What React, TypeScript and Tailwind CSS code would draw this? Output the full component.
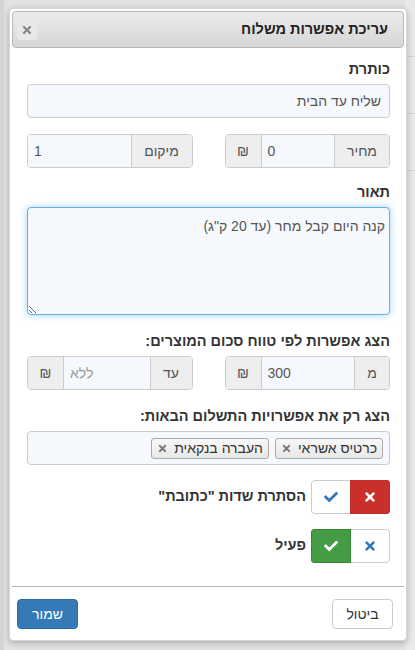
import React from "react";
import { FaCheck, FaTimes } from "react-icons/fa";

const font = { fontFamily: '"Liberation Sans", Arial, sans-serif' };

function Addon({ children, w }: { children: React.ReactNode; w: string }) {
  return (
    <div className={`${w} flex h-full shrink-0 items-center justify-center bg-[#eeeeee] text-[14px] text-[#555]`}>
      {children}
    </div>
  );
}

export default function App() {
  return (
    <div style={font} dir="rtl" className="relative h-[650px] w-[415px] overflow-hidden bg-[#e2e2e2] text-[#333]">
      <div className="absolute right-0 top-0 h-full w-[10px] bg-[#e9e9e9]">
        <div className="mt-[56px] h-px w-full bg-[#d6d6d6]" />
        <div className="mt-[56px] h-px w-full bg-[#d6d6d6]" />
        <div className="mt-[56px] h-px w-full bg-[#d6d6d6]" />
      </div>
      <div className="absolute left-0 top-0 h-full w-[4px] bg-[#d4d4d4]" />
      <div className="relative mr-[8px] mt-[8px] flex h-[633px] w-[398px] flex-col rounded-[4px] border border-[#d6d6d6] bg-white p-[2px] shadow-[0_2px_6px_rgba(0,0,0,0.25)]">
        {/* header */}
        <div className="flex h-[37px] shrink-0 items-center justify-between rounded-[4px] border border-[#b8b8b8] bg-gradient-to-b from-[#ececec] to-[#d6d6d6] pl-[4px] pr-[15px]">
          <div className="text-[14.5px] font-bold text-[#222]">עריכת אפשרות משלוח</div>
          <div className="flex h-[20px] w-[20px] items-center justify-center rounded-[3px] bg-[#e8e8e8] text-[#888]">
            <FaTimes size={12} />
          </div>
        </div>
        {/* body */}
        <div className="flex flex-1 flex-col pl-[15px] pr-[14px] pt-[11px] text-[14px]">
          <label className="mb-[5px] block text-[14.5px] font-bold leading-[20px]">כותרת</label>
          <div className="flex h-[34px] items-center rounded-[4px] border border-[#cccccc] bg-[#f5f9fd] px-[8px] text-[14px] text-[#555]">
            שליח עד הבית
          </div>

          <div className="mt-[16px] grid h-[34px] grid-cols-2 gap-[32px]">
            <div className="flex h-[34px] overflow-hidden rounded-[4px] border border-[#cccccc]">
              <Addon w="w-[55px] border-l border-[#cccccc]">מחיר</Addon>
              <div dir="ltr" className="flex flex-1 items-center bg-[#f5f9fd] px-[6px] text-[#555]">0</div>
              <Addon w="w-[36px] border-r border-[#cccccc]">₪</Addon>
            </div>
            <div className="flex h-[34px] overflow-hidden rounded-[4px] border border-[#cccccc]">
              <Addon w="w-[61px] border-l border-[#cccccc]">מיקום</Addon>
              <div dir="ltr" className="flex flex-1 items-center bg-[#f5f9fd] px-[6px] text-[#555]">1</div>
            </div>
          </div>

          <label className="mb-[5px] mt-[14px] block text-[14.5px] font-bold leading-[20px]">תאור</label>
          <textarea
            dir="rtl"
            defaultValue={'קנה היום קבל מחר (עד 20 ק"ג)'}
            style={font}
            className="block h-[108px] w-full resize-y rounded-[4px] border border-[#66afe9] bg-[#f5f9fd] px-[4px] pb-[6px] pt-[8px] text-[14px] leading-[20px] text-[#555] shadow-[0_0_7px_rgba(102,175,233,0.6)] outline-none"
          />

          <label className="mb-[5px] mt-[16px] block text-[14.5px] font-bold leading-[20px]">הצג אפשרות לפי טווח סכום המוצרים:</label>
          <div className="grid h-[34px] grid-cols-2 gap-[32px]">
            <div className="flex h-[34px] overflow-hidden rounded-[4px] border border-[#cccccc]">
              <Addon w="w-[35px] border-l border-[#cccccc]">מ</Addon>
              <div dir="ltr" className="flex flex-1 items-center bg-[#f5f9fd] px-[6px] text-[#555]">300</div>
              <Addon w="w-[36px] border-r border-[#cccccc]">₪</Addon>
            </div>
            <div className="flex h-[34px] overflow-hidden rounded-[4px] border border-[#cccccc]">
              <Addon w="w-[42px] border-l border-[#cccccc]">עד</Addon>
              <div dir="ltr" className="flex flex-1 items-center bg-[#f5f9fd] px-[6px] text-[#999]">ללא</div>
              <Addon w="w-[36px] border-r border-[#cccccc]">₪</Addon>
            </div>
          </div>

          <label className="mb-[5px] mt-[16px] block text-[14.5px] font-bold leading-[20px]">הצג רק את אפשרויות התשלום הבאות:</label>
          <div className="flex h-[34px] items-center gap-[6px] rounded-[4px] border border-[#cccccc] bg-[#f5f9fd] px-[6px]">
            {["כרטיס אשראי", "העברה בנקאית"].map((t) => (
              <div
                key={t}
                className="flex h-[21px] items-center gap-[6px] rounded-[3px] border border-[#aaaaaa] bg-gradient-to-b from-[#f8f8f8] to-[#e8e8e8] pl-[5px] pr-[5px] text-[14px] leading-[18px] text-[#333]"
              >
                <span>{t}</span>
                <FaTimes size={11} className="text-[#7a7a7a]" />
              </div>
            ))}
          </div>

          <div className="mt-[15px] flex h-[34px] items-center gap-[5px]">
            <div className="flex h-[34px] w-[79px] overflow-hidden rounded-[4px]">
              <div className="flex w-[40px] items-center justify-center border border-[#c12e2a] bg-[#c9302c] text-white">
                <FaTimes size={14} />
              </div>
              <div className="flex flex-1 items-center justify-center rounded-l-[4px] border border-r-0 border-[#cccccc] bg-white text-[#337ab7]">
                <FaCheck size={14} />
              </div>
            </div>
            <span className="text-[14.5px] font-bold">הסתרת שדות "כתובת"</span>
          </div>

          <div className="mt-[15px] flex h-[34px] items-center gap-[5px]">
            <div className="flex h-[34px] w-[79px] overflow-hidden rounded-[4px]">
              <div className="flex w-[39px] items-center justify-center rounded-r-[4px] border border-l-0 border-[#cccccc] bg-white text-[#337ab7]">
                <FaTimes size={14} />
              </div>
              <div className="flex flex-1 items-center justify-center border border-[#398439] bg-[#449d44] text-white">
                <FaCheck size={14} />
              </div>
            </div>
            <span className="text-[14.5px] font-bold">פעיל</span>
          </div>
        </div>
        {/* footer */}
        <div className="mt-auto flex h-[52px] shrink-0 items-start justify-between border-t border-[#b5b5b5] pl-[5px] pr-[11px] pt-[12px]">
          <button style={font} className="h-[30px] w-[61px] rounded-[4px] border border-[#cccccc] bg-white text-[14px] text-[#333]">
            ביטול
          </button>
          <button style={font} className="h-[30px] w-[61px] rounded-[4px] border border-[#2e6da4] bg-[#337ab7] text-[14px] text-white">
            שמור
          </button>
        </div>
      </div>
    </div>
  );
}
